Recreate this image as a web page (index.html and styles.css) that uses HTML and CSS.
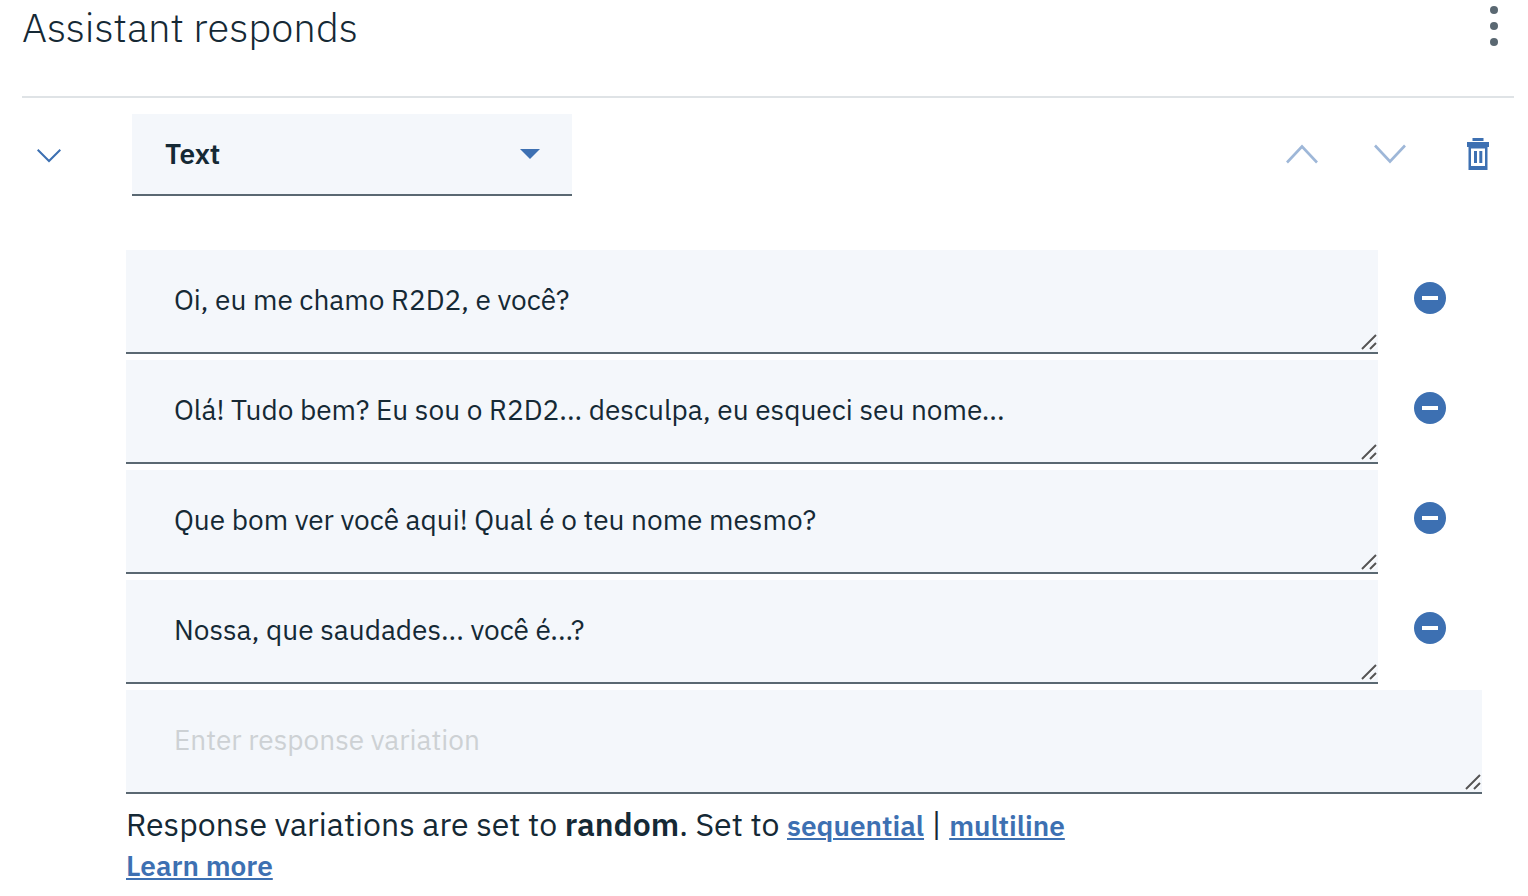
FILE: index.html
```html
<!DOCTYPE html>
<html lang="en">
<head>
<meta charset="utf-8">
<title>Assistant responds</title>
<link rel="stylesheet" href="styles.css">
</head>
<body>
<svg class="defs" aria-hidden="true">
  <symbol id="grip" viewBox="0 0 16 16"><path d="M1 15 15 1M9 15l6-6" fill="none" stroke="#fff" stroke-width="2" transform="translate(1 1)" opacity=".7"/><path d="M1 15 15 1M9 15l6-6" fill="none" stroke="#555" stroke-width="2"/></symbol>
  <symbol id="remove" viewBox="0 0 32 32"><circle cx="16" cy="16" r="16" fill="#3d70b2"/><path d="M8 14h16v4H8z" fill="#fff"/></symbol>
</svg>
<main class="panel">
  <header class="header">
    <h1 class="title">Assistant responds</h1>
    <button class="icon-button menu" type="button" aria-label="More options">
      <svg width="8" height="40" viewBox="0 0 8 40" fill="#5a6872"><circle cx="4" cy="4" r="4"/><circle cx="4" cy="20" r="4"/><circle cx="4" cy="36" r="4"/></svg>
    </button>
  </header>
  <div class="toolbar">
    <button class="icon-button collapse" type="button" aria-label="Collapse response">
      <svg width="24" height="14" viewBox="0 0 24 14"><path d="M.7.7 12 12 23.300.7" fill="none" stroke="#3d70b2" stroke-width="2"/></svg>
    </button>
    <div class="select-box">
      <select class="select" aria-label="Response type"><option>Text</option></select>
      <svg class="caret" width="20" height="10" viewBox="0 0 20 10"><path d="M0 0h20L10 10z" fill="#3d70b2"/></svg>
    </div>
    <div class="actions">
      <button class="icon-button" type="button" aria-label="Move up" disabled>
        <svg width="32" height="20" viewBox="0 0 32 20"><path d="M1 18.500 16 2.500l15 16" fill="none" stroke="#9eb7d8" stroke-width="2.600"/></svg>
      </button>
      <button class="icon-button" type="button" aria-label="Move down" disabled>
        <svg width="32" height="20" viewBox="0 0 32 20"><path d="M1 1.500 16 17.500l15-16" fill="none" stroke="#9eb7d8" stroke-width="2.600"/></svg>
      </button>
      <button class="icon-button" type="button" aria-label="Delete response">
        <svg width="22" height="32" viewBox="0 0 22 32" fill="#3d70b2"><path d="M5.500 0h11v3h-11zM0 4h22v5h-1.500v23H1.500V9H0zM4 10.500V28h14V10.500z" fill-rule="evenodd"/><path d="M7 13h3v12H7zM12.300 13h3v12h-3z"/></svg>
      </button>
    </div>
  </div>
  <section class="variations">
    <div class="row">
      <div class="field"><textarea class="input" rows="1" aria-label="Response variation 1">Oi, eu me chamo R2D2, e você?</textarea><svg class="grip"><use href="#grip"/></svg></div>
      <button class="icon-button remove" type="button" aria-label="Remove variation 1"><svg width="32" height="32"><use href="#remove"/></svg></button>
    </div>
    <div class="row">
      <div class="field"><textarea class="input" rows="1" aria-label="Response variation 2">Olá! Tudo bem? Eu sou o R2D2... desculpa, eu esqueci seu nome...</textarea><svg class="grip"><use href="#grip"/></svg></div>
      <button class="icon-button remove" type="button" aria-label="Remove variation 2"><svg width="32" height="32"><use href="#remove"/></svg></button>
    </div>
    <div class="row">
      <div class="field"><textarea class="input" rows="1" aria-label="Response variation 3">Que bom ver você aqui! Qual é o teu nome mesmo?</textarea><svg class="grip"><use href="#grip"/></svg></div>
      <button class="icon-button remove" type="button" aria-label="Remove variation 3"><svg width="32" height="32"><use href="#remove"/></svg></button>
    </div>
    <div class="row">
      <div class="field"><textarea class="input" rows="1" aria-label="Response variation 4">Nossa, que saudades... você é...?</textarea><svg class="grip"><use href="#grip"/></svg></div>
      <button class="icon-button remove" type="button" aria-label="Remove variation 4"><svg width="32" height="32"><use href="#remove"/></svg></button>
    </div>
    <div class="field"><textarea class="input" rows="1" aria-label="New response variation" placeholder="Enter response variation"></textarea><svg class="grip"><use href="#grip"/></svg></div>
  </section>
  <footer class="footer">
    <p class="note">Response variations are set to <strong class="mode">random</strong>. Set to <a class="link" href="#sequential">sequential</a> | <a class="link" href="#multiline">multiline</a></p>
    <p class="note"><a class="link" href="#learn">Learn more</a></p>
  </footer>
</main>
</body>
</html>
```
FILE: styles.css
```css
* {
  box-sizing: border-box;
}

body {
  margin: 0;
  background: #fff;
  color: #152935;
  font-family: "IBM Plex Sans", Roboto, "Liberation Sans", sans-serif;
}

.defs {
  position: absolute;
  width: 0;
  height: 0;
}

.panel {
  padding: 0 14px 0 22px;
}

.header {
  display: flex;
  justify-content: space-between;
  align-items: flex-start;
  padding: 4px 0 46px;
  border-bottom: 2px solid #dfe3e6;
}

.title {
  margin: 0;
  font-size: 40px;
  font-weight: 300;
  line-height: 46px;
}

.icon-button {
  display: flex;
  align-items: center;
  justify-content: center;
  padding: 0;
  border: 0;
  background: none;
  cursor: pointer;
}

.icon-button:disabled {
  cursor: default;
}

.menu {
  width: 40px;
  height: 44px;
}

.toolbar {
  display: flex;
  align-items: center;
  padding-top: 16px;
}

.collapse {
  width: 54px;
  height: 54px;
  margin-right: 56px;
  padding-top: 2px;
}

.select-box {
  position: relative;
  flex: 0 1 440px;
}

.select {
  width: 100%;
  height: 82px;
  padding: 0 64px 2px 33px;
  appearance: none;
  border: 0;
  border-bottom: 2px solid #5a6872;
  border-radius: 0;
  background: #f4f7fb;
  color: inherit;
  font-family: inherit;
  font-size: 28px;
  font-weight: 600;
}

.caret {
  position: absolute;
  top: 35px;
  right: 32px;
  pointer-events: none;
}

.actions {
  display: flex;
  gap: 44px;
  margin-left: auto;
  padding: 0 14px 2px 0;
}

.actions .icon-button {
  width: 44px;
  height: 44px;
}

.variations {
  display: grid;
  gap: 6px;
  padding: 54px 32px 0 104px;
}

.row {
  display: grid;
  grid-template-columns: 1fr 104px;
  align-items: start;
}

.field {
  position: relative;
  display: flex;
}

.input {
  width: 100%;
  height: 104px;
  padding: 32px 48px;
  overflow: hidden;
  resize: none;
  border: 0;
  border-bottom: 2px solid #5a6872;
  border-radius: 0;
  background: #f4f7fb;
  color: inherit;
  font-family: inherit;
  font-size: 28px;
  line-height: 36px;
}

.input::placeholder {
  color: #cdd1d4;
}

.grip {
  position: absolute;
  right: 1px;
  bottom: 4px;
  width: 16px;
  height: 16px;
  pointer-events: none;
}

.remove {
  justify-self: center;
  margin-top: 32px;
}

.footer {
  padding: 11px 0 0 104px;
}

.note {
  margin: 0;
  font-size: 32px;
  line-height: 38px;
}

.mode {
  font-weight: 600;
}

.link {
  color: #3d70b2;
  font-size: 28px;
  font-weight: 600;
  text-decoration-thickness: 2px;
  text-underline-offset: 2px;
}
```
